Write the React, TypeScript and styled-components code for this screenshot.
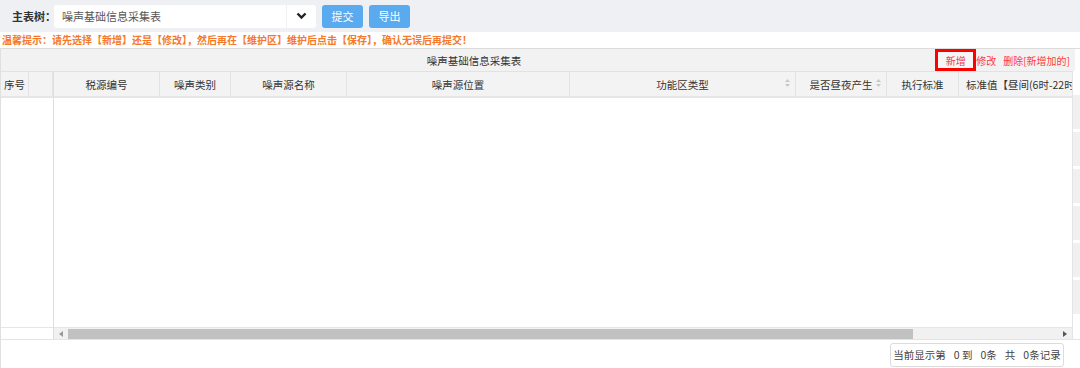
import React from "react";
import styled, { createGlobalStyle } from "styled-components";

const GlobalStyle = createGlobalStyle`
  html, body {
    margin: 0;
    padding: 0;
    background: #ffffff;
    font-family: "Noto Sans CJK SC", "Liberation Sans", sans-serif;
  }
  * { box-sizing: border-box; }
`;

const columns = [
  { title: "税源编号", width: 106 },
  { title: "噪声类别", width: 71 },
  { title: "噪声源名称", width: 116 },
  { title: "噪声源位置", width: 223 },
  { title: "功能区类型", width: 226, sort: true },
  { title: "是否昼夜产生", width: 91, sort: true },
  { title: "执行标准", width: 72 },
  { title: "标准值【昼间(6时-22时)】", width: 160, left: true },
];

const pagerParts = ["当前显示第", "0 到", "0条", "共", "0条记录"];

const Page = styled.div`
  width: 1080px;
  height: 368px;
  overflow: hidden;
  background: #fff;
`;

const TopBar = styled.div`
  height: 32px;
  background: #eef0f3;
  display: flex;
  align-items: center;
  padding-left: 12px;
`;

const Label = styled.span`
  font-size: 11px;
  font-weight: bold;
  color: #333;
  width: 42px;
  flex-shrink: 0;
  white-space: nowrap;
`;

const Select = styled.div`
  width: 262px;
  height: 23px;
  background: #fff;
  border-radius: 3px;
  display: flex;
  align-items: center;
  font-size: 11px;
  color: #555;
  padding-left: 8px;
`;

const SelectText = styled.span`
  flex: 1;
`;

const Chevron = styled.div`
  width: 30px;
  height: 23px;
  display: flex;
  align-items: center;
  justify-content: center;
  border-left: 1px solid #f0f0f0;
`;

const Button = styled.button`
  width: 41px;
  height: 23px;
  margin-left: 6px;
  border: none;
  border-radius: 3px;
  background: #5aaaf0;
  color: #fff;
  font-family: inherit;
  font-size: 11px;
  padding: 0;
`;

const Warn = styled.div`
  height: 16px;
  line-height: 16px;
  font-size: 10px;
  font-weight: bold;
  color: #f5792a;
  padding-left: 2px;
  white-space: nowrap;
`;

const Panel = styled.div`
  width: 1080px;
  border-top: 1px solid #dcdcdc;
  border-left: 1px solid #e0e0e0;
`;

const TitleBar = styled.div`
  height: 22px;
  background: #f2f2f2;
  display: flex;
  align-items: center;
  width: 1074px;
`;

const Title = styled.div`
  flex: 1;
  text-align: center;
  font-size: 10.5px;
  color: #333;
  padding-left: 12px;
`;

const Actions = styled.div`
  display: flex;
  align-items: center;
  height: 22px;
  font-size: 10px;
  color: #ff3b3b;
  padding-right: 5px;
`;

const AddBox = styled.span`
  border: 3px solid #ff0000;
  height: 22px;
  width: 41px;
  display: flex;
  align-items: center;
  justify-content: center;
  color: #ee3b3b;
  background: #f6f6f6;
`;

const Action = styled.span<{ $gap?: number }>`
  margin-left: ${(p) => p.$gap ?? 0}px;
  white-space: nowrap;
`;

const Grid = styled.div`
  display: flex;
  width: 1079px;
`;

const Frozen = styled.div`
  width: 53px;
  flex-shrink: 0;
  border-right: 1px solid #dedede;
  display: flex;
  flex-direction: column;
`;

const Main = styled.div`
  width: 1019px;
  display: flex;
  flex-direction: column;
  overflow: hidden;
`;

const HeadRow = styled.div`
  height: 27px;
  display: flex;
  background: #f3f3f3;
  border-top: 1px solid #e2e2e2;
  border-bottom: 2px solid #e6e6e6;
  flex-shrink: 0;
`;

const HeadCell = styled.div<{ $w: number; $left?: boolean }>`
  width: ${(p) => p.$w}px;
  flex-shrink: 0;
  border-right: 1px solid #e3e3e3;
  display: flex;
  align-items: center;
  justify-content: ${(p) => (p.$left ? "flex-start" : "center")};
  padding-left: ${(p) => (p.$left ? 7 : 0)}px;
  font-size: 10.5px;
  color: #333;
  position: relative;
  white-space: nowrap;
  overflow: hidden;
`;

const Sort = styled.svg`
  position: absolute;
  right: 5px;
  top: 7px;
`;

const Body = styled.div`
  height: 229px;
  background: #fff;
  flex-shrink: 0;
`;

const ScrollRow = styled.div`
  height: 12px;
  display: flex;
  align-items: center;
  background: #f1f1f1;
  border-top: 1px solid #e6e6e6;
  flex-shrink: 0;
`;

const FrozenScroll = styled.div`
  height: 12px;
  background: #fff;
  border-top: 1px solid #e6e6e6;
`;

const Arrow = styled.div`
  width: 14px;
  height: 11px;
  display: flex;
  align-items: center;
  justify-content: center;
`;

const Thumb = styled.div`
  width: 845px;
  height: 10px;
  background: #c1c1c1;
`;

const Track = styled.div`
  flex: 1;
`;

const VBar = styled.div`
  width: 8px;
  display: flex;
  flex-direction: column;
  gap: 3px;
  padding-top: 24px;
  border-left: 1px solid #e4e4e4;
`;

const VSeg = styled.div`
  height: 34px;
  background: #f0f0f0;
`;

const Footer = styled.div`
  height: 30px;
  border-top: 1px solid #e4e4e4;
  display: flex;
  justify-content: flex-end;
  align-items: center;
  padding-right: 16px;
  width: 1079px;
`;

const Pager = styled.div`
  height: 24px;
  width: 174px;
  border: 1px solid #dcdcdc;
  border-radius: 3px;
  display: flex;
  align-items: center;
  justify-content: center;
  gap: 8px;
  font-size: 10.5px;
  color: #444;
  white-space: nowrap;
`;

const SortIcon = () => (
  <Sort width="5" height="8" viewBox="0 0 5 8">
    <path d="M2.5 0 L5 3 L0 3 Z" fill="#c8c8c8" />
    <path d="M2.5 8 L5 5 L0 5 Z" fill="#c8c8c8" />
  </Sort>
);

const App = () => {
  return (
    <Page>
      <GlobalStyle />
      <TopBar>
        <Label>主表树：</Label>
        <Select>
          <SelectText>噪声基础信息采集表</SelectText>
          <Chevron>
            <svg width="11" height="8" viewBox="0 0 11 8">
              <path d="M1.5 1.5 L5.5 5.5 L9.5 1.5" stroke="#222" strokeWidth="2.4" fill="none" />
            </svg>
          </Chevron>
        </Select>
        <Button>提交</Button>
        <Button>导出</Button>
      </TopBar>
      <Warn>温馨提示：请先选择【新增】还是【修改】，然后再在【维护区】维护后点击【保存】，确认无误后再提交！</Warn>
      <Panel>
        <TitleBar>
          <Title>噪声基础信息采集表</Title>
          <Actions>
            <AddBox>新增</AddBox>
            <Action>修改</Action>
            <Action $gap={7}>删除[新增加的]</Action>
          </Actions>
        </TitleBar>
        <Grid>
          <Frozen>
            <HeadRow>
              <HeadCell $w={28}>序号</HeadCell>
              <HeadCell $w={24} />
            </HeadRow>
            <Body />
            <FrozenScroll />
          </Frozen>
          <Main>
            <HeadRow>
              {columns.map((c) => (
                <HeadCell key={c.title} $w={c.width} $left={c.left}>
                  {c.title}
                  {c.sort && <SortIcon />}
                </HeadCell>
              ))}
            </HeadRow>
            <Body />
            <ScrollRow>
              <Arrow>
                <svg width="4" height="6" viewBox="0 0 4 6">
                  <path d="M4 0 L0 3 L4 6 Z" fill="#999" />
                </svg>
              </Arrow>
              <Thumb />
              <Track />
              <Arrow>
                <svg width="4" height="6" viewBox="0 0 4 6">
                  <path d="M0 0 L4 3 L0 6 Z" fill="#555" />
                </svg>
              </Arrow>
            </ScrollRow>
          </Main>
          <VBar>
            {Array.from({ length: 6 }).map((_, i) => (
              <VSeg key={i} />
            ))}
          </VBar>
        </Grid>
        <Footer>
          <Pager>
            {pagerParts.map((p) => (
              <span key={p}>{p}</span>
            ))}
          </Pager>
        </Footer>
      </Panel>
    </Page>
  );
};

export default App;
